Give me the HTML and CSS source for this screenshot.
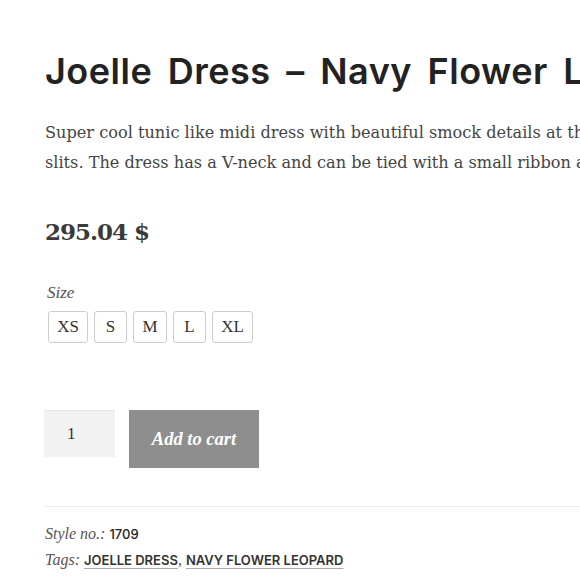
FILE: index.html
```html
<!DOCTYPE html>
<html lang="en">
<head>
<meta charset="utf-8">
<title>Joelle Dress</title>
<link rel="stylesheet" href="styles.css">
</head>
<body>
<main class="product">
  <h1 class="title">Joelle Dress – Navy Flower Leopard</h1>
  <div class="desc">
    <p>Super cool tunic like midi dress with beautiful smock details at the waist and sleeves, and side<br>slits. The dress has a V-neck and can be tied with a small ribbon at the neck.</p>
  </div>
  <p class="price">295.04 $</p>
  <div class="variations">
    <div class="label">Size</div>
    <div class="swatches">
      <span class="swatch sw-xs">XS</span>
      <span class="swatch sw-s">S</span>
      <span class="swatch sw-m">M</span>
      <span class="swatch sw-l">L</span>
      <span class="swatch sw-xl">XL</span>
    </div>
  </div>
  <form class="cart">
    <div class="qty">1</div>
    <button type="button" class="add">Add to cart</button>
  </form>
  <div class="meta">
    <div class="meta-row"><span class="meta-label">Style no.:</span> <span class="meta-val">1709</span></div>
    <div class="meta-row"><span class="meta-label">Tags:</span> <a class="tag">JOELLE DRESS</a>, <a class="tag">NAVY FLOWER LEOPARD</a></div>
  </div>
</main>
</body>
</html>
```
FILE: styles.css
```css
html, body {
  margin: 0;
  padding: 0;
  background: #fff;
  overflow: hidden;
}
body {
  width: 580px;
  height: 580px;
  font-family: "Liberation Serif", "DejaVu Serif", serif;
  color: #333;
}
.product {
  padding: 45px 0 0 45px;
  white-space: nowrap;
}
.title {
  margin: 0;
  font-family: Inter, Roboto, "Liberation Sans", sans-serif;
  font-weight: 600;
  font-size: 36px;
  line-height: 52px;
  color: #222;
  letter-spacing: 0.5px;
  word-spacing: 6px;
}
.desc {
  margin-top: 21px;
}
.desc p {
  margin: 0;
  font-family: "DejaVu Serif", "Liberation Serif", serif;
  font-size: 16.15px;
  line-height: 30px;
  color: #444;
}
.price {
  margin: 39px 0 0;
  font-family: "DejaVu Serif", "Liberation Serif", serif;
  font-weight: bold;
  font-size: 23px;
  line-height: 30px;
  color: #3a3a3a;
  letter-spacing: -1px;
}
.variations {
  margin-top: 36px;
  padding-left: 2px;
}
.label {
  font-style: italic;
  font-size: 17px;
  line-height: 20px;
  color: #555;
}
.swatches {
  display: flex;
  gap: 6px;
  margin-top: 8px;
  padding-left: 1px;
}
.swatch {
  box-sizing: border-box;
  height: 32px;
  border: 1px solid #ccc;
  border-radius: 3px;
  display: flex;
  align-items: center;
  justify-content: center;
  font-size: 17px;
  color: #333;
}
.sw-xs { width: 40px; }
.sw-s { width: 33px; }
.sw-m { width: 34px; }
.sw-l { width: 33px; }
.sw-xl { width: 41px; }
.cart {
  display: flex;
  align-items: flex-start;
  gap: 14px;
  margin: 67px 0 0 -1px;
}
.qty {
  box-sizing: border-box;
  width: 71px;
  height: 47px;
  background: #f2f2f2;
  border-top: 1px solid #e6e6e6;
  padding: 13px 0 0 23px;
  font-size: 17px;
  color: #333;
}
.add {
  width: 130px;
  height: 58px;
  border: 0;
  background: #8e8e8e;
  color: #fff;
  font-family: "Liberation Serif", serif;
  font-style: italic;
  font-weight: bold;
  font-size: 18.5px;
  padding: 0;
}
.meta {
  margin-top: 38px;
  border-top: 1px solid #eee;
  padding-top: 14px;
}
.meta-row {
  font-size: 16px;
  line-height: 26px;
  color: #555;
}
.meta-label {
  font-style: italic;
}
.meta-val {
  font-family: Inter, "Liberation Sans", sans-serif;
  font-size: 13px;
  font-weight: 500;
  color: #222;
}
.tag {
  font-family: Inter, "Liberation Sans", sans-serif;
  font-size: 13px;
  font-weight: 600;
  color: #333;
  text-decoration: underline;
  text-decoration-color: #aaa;
  text-underline-offset: 3px;
}
```
